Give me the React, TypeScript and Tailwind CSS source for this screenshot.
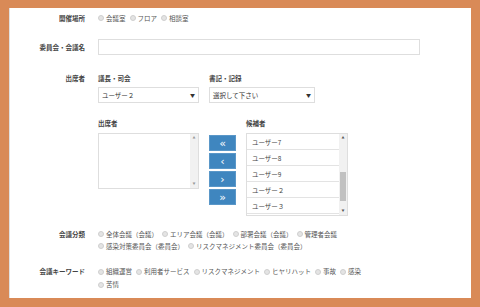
import React from "react";

const font = { fontFamily: '"Noto Sans CJK JP", "Noto Sans", sans-serif' };

function Radio({ label }: { label: string }) {
  return (
    <span className="inline-flex items-center mr-[4px] whitespace-nowrap">
      <span className="w-[6px] h-[6px] rounded-full bg-[#e4e4e4] border border-[#cfcfcf] mr-[2px] shrink-0" />
      <span className="text-[#555]">{label}</span>
    </span>
  );
}

function Label({ children }: { children: React.ReactNode }) {
  return (
    <div className="w-[75px] shrink-0 text-right font-bold text-[#444]">{children}</div>
  );
}

function Caret() {
  return <span className="text-[5px] text-[#333]">▼</span>;
}

export default function App() {
  const candidates = ["ユーザー7", "ユーザー8", "ユーザー9", "ユーザー２", "ユーザー３"];
  return (
    <div className="w-[480px] h-[307px] bg-[#d98a57] pt-[8px] pl-[9px]" style={font}>
      <div className="w-[462px] h-[290px] bg-white border-l border-l-[#e0e0e0] text-[6.5px] leading-[10px]">
        {/* 開催場所 */}
        <div className="flex gap-[13px] pt-[5px] h-[15px]">
          <Label>開催場所</Label>
          <div className="flex items-center">
            <Radio label="会議室" />
            <Radio label="フロア" />
            <Radio label="相談室" />
          </div>
        </div>
        {/* 委員会・会議名 */}
        <div className="flex gap-[13px] items-center mt-[16px]">
          <Label>委員会・会議名</Label>
          <div className="w-[322px] h-[16px] border border-[#dedede] bg-white" />
        </div>
        {/* 出席者 */}
        <div className="flex gap-[13px] mt-[18px]">
          <Label>出席者</Label>
          <div className="flex flex-col">
            <div className="flex gap-[10px]">
              <div className="w-[101px] flex flex-col">
                <div className="font-bold text-[#444] h-[10px]">議長・司会</div>
                <div className="mt-[4px] h-[16px] border border-[#dedede] flex items-center justify-between px-[3px]">
                  <span className="text-[#333]">ユーザー２</span>
                  <Caret />
                </div>
              </div>
              <div className="w-[106px] flex flex-col">
                <div className="font-bold text-[#444] h-[10px]">書記・記録</div>
                <div className="mt-[4px] h-[16px] border border-[#dedede] flex items-center justify-between px-[3px]">
                  <span className="text-[#333]">選択して下さい</span>
                  <Caret />
                </div>
              </div>
            </div>
            <div className="flex gap-[10px] mt-[15px]">
              <div className="w-[101px] flex flex-col">
                <div className="font-bold text-[#444] h-[10px]">出席者</div>
                <div className="mt-[5px] h-[56px] border border-[#dedede] flex">
                  <div className="flex-1" />
                  <div className="w-[8px] bg-[#f1f1f1] flex flex-col justify-between items-center py-[2px] text-[3px] leading-[4px] text-[#999]">
                    <span>▲</span>
                    <span>▼</span>
                  </div>
                </div>
              </div>
              <div className="w-[27px] flex flex-col gap-[2px] pt-[17px]">
                {["«", "‹", "›", "»"].map((g) => (
                  <div
                    key={g}
                    className="h-[16px] bg-[#3f86bf] border border-[#5a97c8] text-white flex items-center justify-center text-[11px] leading-none"
                    style={{ fontFamily: '"DejaVu Sans", sans-serif' }}
                  >
                    {g}
                  </div>
                ))}
              </div>
              <div className="w-[102px] flex flex-col">
                <div className="font-bold text-[#444] h-[10px]">候補者</div>
                <div className="mt-[5px] h-[83px] border border-[#dedede] flex overflow-hidden">
                  <div className="flex-1 flex flex-col">
                    {candidates.map((c) => (
                      <div key={c} className="h-[16px] shrink-0 border-b border-[#e3e3e3] flex items-center pl-[5px] text-[#444]">
                        {c}
                      </div>
                    ))}
                  </div>
                  <div className="w-[8px] bg-[#f1f1f1] flex flex-col items-center">
                    <span className="text-[3px] leading-[4px] text-[#555] mt-[2px]">▲</span>
                    <div className="w-[6px] h-[29px] bg-[#c1c1c1] mt-[32px]" />
                    <div className="flex-1" />
                    <span className="text-[3px] leading-[4px] text-[#555] mb-[2px]">▼</span>
                  </div>
                </div>
              </div>
            </div>
          </div>
        </div>
        {/* 会議分類 */}
        <div className="flex gap-[13px] mt-[12px] leading-[12px]">
          <Label>会議分類</Label>
          <div className="flex flex-col">
            <div className="flex">
              <Radio label="全体会議（会議）" />
              <Radio label="エリア会議（会議）" />
              <Radio label="部署会議（会議）" />
              <Radio label="管理者会議" />
            </div>
            <div className="flex">
              <Radio label="感染対策委員会（委員会）" />
              <Radio label="リスクマネジメント委員会（委員会）" />
            </div>
          </div>
        </div>
        {/* 会議キーワード */}
        <div className="flex gap-[13px] mt-[13px] leading-[13px]">
          <Label>会議キーワード</Label>
          <div className="flex flex-col">
            <div className="flex">
              <Radio label="組織運営" />
              <Radio label="利用者サービス" />
              <Radio label="リスクマネジメント" />
              <Radio label="ヒヤリハット" />
              <Radio label="事故" />
              <Radio label="感染" />
            </div>
            <div className="flex">
              <Radio label="苦情" />
            </div>
          </div>
        </div>
      </div>
    </div>
  );
}
